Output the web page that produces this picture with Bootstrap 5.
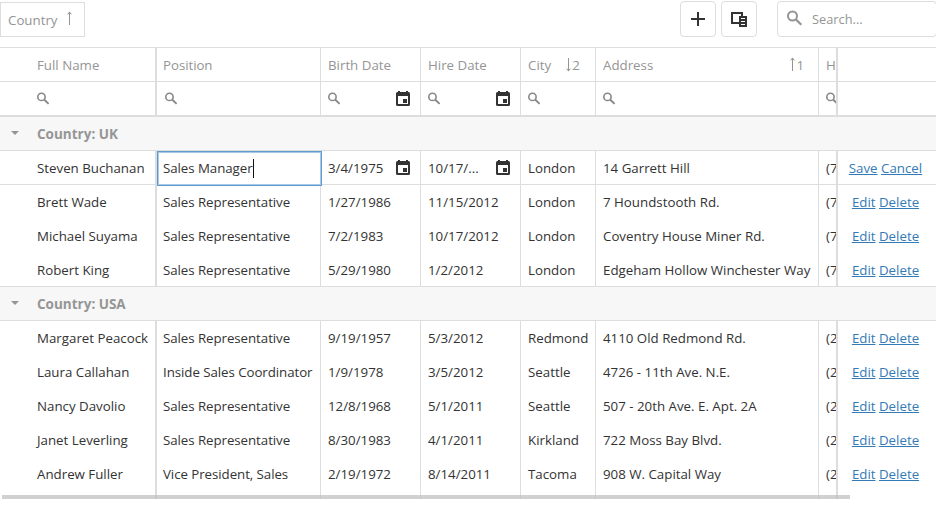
<!DOCTYPE html>
<html lang="en">
<head>
<meta charset="utf-8">
<meta name="viewport" content="width=device-width, initial-scale=1">
<title>Employees</title>
<link href="https://cdn.jsdelivr.net/npm/bootstrap@5.3.0/dist/css/bootstrap.min.css" rel="stylesheet">
<style>
:root{--line:#ddd;--muted:#959595;--ink:#333;--link:#337ab7}
body{font-family:"Open Sans","Noto Sans",sans-serif;font-size:13.3px;line-height:18px;color:var(--ink);background:#fff;overflow:hidden}
svg{display:block;flex:none}
.toolbar{height:47px}
.group-chip{width:85px;height:35px;margin-top:2px;padding-left:7px;border:1px solid var(--line);color:var(--muted)}
.group-chip svg{margin:0 0 2px 8px}
.tools{gap:5px;margin:1px -1px 0 auto}
.tool-btn{width:36px;height:36px;border:1px solid var(--line);border-radius:4px;color:var(--ink)}
.search-box{width:160px;height:36px;margin-left:15px;padding-left:9px;border:1px solid var(--line);border-radius:4px;color:var(--muted)}
.search-box svg{margin:0 9px 2px 0}
.search-box input{width:100px;font-size:12.8px;color:var(--muted)}
.search-box input::placeholder{color:var(--muted);opacity:1}
.data-grid{width:936px;table-layout:fixed;border-collapse:separate;border-spacing:0;border-top:1px solid var(--line)}
.data-grid th,.data-grid td{height:34px;padding:0 0 0 7px;border:0 solid var(--line);border-right-width:1px;white-space:nowrap;overflow:hidden;vertical-align:middle;font-weight:400}
.data-grid th:first-child,.data-grid td:first-child{padding-left:37px}
.data-grid th:nth-child(2),.data-grid td:nth-child(2){padding-left:6px;letter-spacing:-.06px}
.data-grid th:nth-child(1),.data-grid td:nth-child(1),.data-grid th:nth-child(7),.data-grid td:nth-child(7){border-right-width:2px}
.data-grid th:last-child,.data-grid td:last-child{border-right-width:0}
.data-grid td:last-child{padding:0 3px 0 0;text-align:center}
.data-grid thead{color:var(--muted)}
.data-grid thead th,.data-grid .ruled td{border-bottom-width:1px}
.data-grid .filters td{height:35px;border-bottom-width:2px}
.data-grid .filters td:nth-child(2){padding-left:8px}
.data-grid .filters .lens{color:#888}
.data-grid .group-row td{background:#f7f7f7;border-width:0 0 1px;padding:0 0 0 11px;color:var(--muted);font-weight:700;text-align:left;font-size:13.5px}
.group-row svg{margin:-1px 18px 0 0}
.data-grid .tail td{height:8px}
.data-grid a{color:var(--link)}
.data-grid td.editing{padding:0!important;overflow:visible}
.cell-editor{height:35px;width:165px;margin:0 -1px -2px 0;padding:0 0 1px 5px;border:1px solid #5f9bd1;box-shadow:inset 0 0 0 1px #a9c9e6;position:relative;background:#fff}
.caret{width:1px;height:19px;background:#111}
.cal{margin:0 10px 0 auto}
.sort-down{margin-left:14px}
.order{margin-right:14px}
.hscroll{position:absolute;left:2px;top:495px;width:848px;height:4px;background:rgba(187,187,187,.68)}
</style>
<script src="https://cdn.jsdelivr.net/npm/bootstrap@5.3.0/dist/js/bootstrap.bundle.min.js"></script>
</head>
<body>
<svg class="d-none">
<symbol id="lens" viewBox="0 0 16 16"><circle cx="5.500" cy="6" r="4.500" fill="none" stroke="currentColor" stroke-width="2"/><path d="M9 9.500 14.300 14.700" stroke="currentColor" stroke-width="2.300"/></symbol>
<symbol id="cal" viewBox="0 0 14 15"><path fill="currentColor" fill-rule="evenodd" d="M2 0h2v1h6V0h2v1h.5A1.500 1.500 0 0 1 14 2.500V13.500A1.500 1.500 0 0 1 12.500 15H1.500A1.500 1.500 0 0 1 0 13.500V2.500A1.500 1.500 0 0 1 1.500 1H2zM2 5v8h10V5zM7 8h4v4H7z"/></symbol>
<symbol id="up" viewBox="0 0 7 15"><path d="M3.500 14V1" stroke="currentColor"/><path d="M.8 3.700 3.500.5 6.200 3.700 3.500 2.500z" fill="currentColor"/></symbol>
<symbol id="down" viewBox="0 0 7 15"><path d="M3.500 1v13" stroke="currentColor"/><path d="M.8 11.300 3.500 14.500 6.200 11.300 3.500 12.500z" fill="currentColor"/></symbol>
<symbol id="fold" viewBox="0 0 8 4"><path d="M0 0h8L4 4z" fill="currentColor"/></symbol>
</svg>
<div class="toolbar d-flex align-items-start">
  <div class="group-chip d-flex align-items-center">Country<svg width="7" height="15"><use href="#up"/></svg></div>
  <div class="tools d-flex">
    <button class="tool-btn btn p-0 d-flex align-items-center justify-content-center" aria-label="Add"><svg width="14" height="14"><path d="M7 0v14M0 7h14" stroke="currentColor" stroke-width="2"/></svg></button>
    <button class="tool-btn btn p-0 d-flex align-items-center justify-content-center" aria-label="Columns"><svg width="16" height="15"><path d="M8 11H1V1h10v3" fill="none" stroke="currentColor" stroke-width="2"/><path fill="currentColor" fill-rule="evenodd" d="M8 4h8v11H8zM10 6v1h4V6zM10 9v1h4V9zM10 12v1h4v-1z"/></svg></button>
    <div class="search-box d-flex align-items-center"><svg width="16" height="16"><use href="#lens"/></svg><input class="border-0 p-0 bg-transparent" placeholder="Search..." aria-label="Search"></div>
  </div>
</div>
<table class="data-grid">
<colgroup><col width="157"><col width="164"><col width="100"><col width="100"><col width="75"><col width="223"><col width="19"><col width="98"></colgroup>
<thead>
<tr><th>Full Name</th><th>Position</th><th>Birth Date</th><th>Hire Date</th><th><div class="d-flex align-items-center">City<svg class="sort-down" width="7" height="15"><use href="#down"/></svg>2</div></th><th><div class="d-flex align-items-center">Address<svg class="ms-auto" width="7" height="15"><use href="#up"/></svg><span class="order">1</span></div></th><th>H</th><th></th></tr>
</thead>
<tbody>
<tr class="filters">
<td><svg class="lens" width="13" height="13"><use href="#lens"/></svg></td>
<td><svg class="lens" width="13" height="13"><use href="#lens"/></svg></td>
<td><div class="d-flex align-items-center"><svg class="lens" width="13" height="13"><use href="#lens"/></svg><svg class="cal" width="14" height="15"><use href="#cal"/></svg></div></td>
<td><div class="d-flex align-items-center"><svg class="lens" width="13" height="13"><use href="#lens"/></svg><svg class="cal" width="14" height="15"><use href="#cal"/></svg></div></td>
<td><svg class="lens" width="13" height="13"><use href="#lens"/></svg></td>
<td><svg class="lens" width="13" height="13"><use href="#lens"/></svg></td>
<td><svg class="lens" width="13" height="13"><use href="#lens"/></svg></td>
<td></td></tr>
<tr class="group-row"><td colspan="8"><div class="d-flex align-items-center"><svg width="8" height="4"><use href="#fold"/></svg>Country: UK</div></td></tr>
<tr class="ruled"><td>Steven Buchanan</td><td class="editing"><div class="cell-editor d-flex align-items-center">Sales Manager<span class="caret"></span></div></td><td><div class="d-flex align-items-center">3/4/1975<svg class="cal" width="14" height="15"><use href="#cal"/></svg></div></td><td><div class="d-flex align-items-center">10/17/...<svg class="cal" width="14" height="15"><use href="#cal"/></svg></div></td><td>London</td><td>14 Garrett Hill</td><td>(7</td><td><a href="#">Save</a> <a href="#">Cancel</a></td></tr>
<tr><td>Brett Wade</td><td>Sales Representative</td><td>1/27/1986</td><td>11/15/2012</td><td>London</td><td>7 Houndstooth Rd.</td><td>(7</td><td><a href="#">Edit</a> <a href="#">Delete</a></td></tr>
<tr><td>Michael Suyama</td><td>Sales Representative</td><td>7/2/1983</td><td>10/17/2012</td><td>London</td><td>Coventry House Miner Rd.</td><td>(7</td><td><a href="#">Edit</a> <a href="#">Delete</a></td></tr>
<tr class="ruled"><td>Robert King</td><td>Sales Representative</td><td>5/29/1980</td><td>1/2/2012</td><td>London</td><td>Edgeham Hollow Winchester Way</td><td>(7</td><td><a href="#">Edit</a> <a href="#">Delete</a></td></tr>
<tr class="group-row"><td colspan="8"><div class="d-flex align-items-center"><svg width="8" height="4"><use href="#fold"/></svg>Country: USA</div></td></tr>
<tr><td>Margaret Peacock</td><td>Sales Representative</td><td>9/19/1957</td><td>5/3/2012</td><td>Redmond</td><td>4110 Old Redmond Rd.</td><td>(2</td><td><a href="#">Edit</a> <a href="#">Delete</a></td></tr>
<tr><td>Laura Callahan</td><td>Inside Sales Coordinator</td><td>1/9/1978</td><td>3/5/2012</td><td>Seattle</td><td>4726 - 11th Ave. N.E.</td><td>(2</td><td><a href="#">Edit</a> <a href="#">Delete</a></td></tr>
<tr><td>Nancy Davolio</td><td>Sales Representative</td><td>12/8/1968</td><td>5/1/2011</td><td>Seattle</td><td>507 - 20th Ave. E. Apt. 2A</td><td>(2</td><td><a href="#">Edit</a> <a href="#">Delete</a></td></tr>
<tr><td>Janet Leverling</td><td>Sales Representative</td><td>8/30/1983</td><td>4/1/2011</td><td>Kirkland</td><td>722 Moss Bay Blvd.</td><td>(2</td><td><a href="#">Edit</a> <a href="#">Delete</a></td></tr>
<tr><td>Andrew Fuller</td><td>Vice President, Sales</td><td>2/19/1972</td><td>8/14/2011</td><td>Tacoma</td><td>908 W. Capital Way</td><td>(2</td><td><a href="#">Edit</a> <a href="#">Delete</a></td></tr>
<tr class="tail"><td></td><td></td><td></td><td></td><td></td><td></td><td></td><td></td></tr>
</tbody>
</table>
<div class="hscroll"></div>
</body>
</html>
